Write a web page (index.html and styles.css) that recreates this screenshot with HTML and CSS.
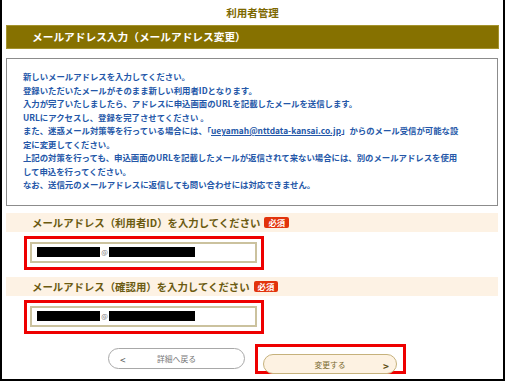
FILE: index.html
```html
<!DOCTYPE html>
<html lang="ja">
<head>
  <meta charset="UTF-8" />
  <meta name="viewport" content="width=device-width, initial-scale=1" />
  <title>利用者管理</title>
  <link rel="stylesheet" href="styles.css">
</head>
<body>
  <div class="page">
    <h1 class="title">利用者管理</h1>
    <div class="banner">メールアドレス入力（メールアドレス変更）</div>

    <div class="notice">
      新しいメールアドレスを入力してください。<br>
      登録いただいたメールがそのまま新しい利用者IDとなります。<br>
      入力が完了いたしましたら、アドレスに申込画面のURLを記載したメールを送信します。<br>
      URLにアクセスし、登録を完了させてください 。<br>
      また、迷惑メール対策等を行っている場合には、「<a class="mail" href="#">ueyamah@nttdata-kansai.co.jp</a>」からのメール受信が可能な設<br>
      定に変更してください。<br>
      上記の対策を行っても、申込画面のURLを記載したメールが返信されて来ない場合には、別のメールアドレスを使用<br>
      して申込を行ってください。<br>
      なお、送信元のメールアドレスに返信しても問い合わせには対応できません。
    </div>

    <div class="field-label">メールアドレス（利用者ID）を入力してください<span class="req">必須</span></div>
    <div class="mark mark-input">
      <div class="input"><span class="mask mask-a"></span><span class="at">@</span><span class="mask mask-b"></span></div>
    </div>

    <div class="field-label">メールアドレス（確認用）を入力してください<span class="req">必須</span></div>
    <div class="mark mark-input">
      <div class="input"><span class="mask mask-a"></span><span class="at">@</span><span class="mask mask-b"></span></div>
    </div>

    <div class="actions">
      <button class="btn btn-back"><span class="arrow">&lt;</span>詳細へ戻る</button>
      <div class="mark mark-btn">
        <button class="btn btn-next">変更する<span class="arrow">&gt;</span></button>
      </div>
    </div>
  </div>
</body>
</html>
```

FILE: styles.css
```css
* {
  box-sizing: border-box;
}

body {
  margin: 0;
  font-family: "Noto Sans CJK JP", "Noto Sans", sans-serif;
  background: #fff;
}

.page {
  width: 505px;
  height: 381px;
  border: 2px solid #000;
  border-top: none;
  padding: 0 4px 0 4px;
  display: flex;
  flex-direction: column;
  overflow: hidden;
}

.title {
  margin: 5px 0 0;
  font-size: 10.5px;
  line-height: 15px;
  font-weight: bold;
  text-align: center;
  color: #7c6800;
}

.banner {
  flex: none;
  margin-top: 5px;
  height: 24px;
  background: #867100;
  border: 1px solid #a4932e;
  color: #fff;
  font-size: 10.7px;
  font-weight: bold;
  line-height: 22px;
  padding-left: 25px;
  white-space: nowrap;
}

.notice {
  flex: none;
  margin-top: 9px;
  border: 1px solid #8c8c8c;
  padding: 11px 0 13px 16px;
  font-size: 8.4px;
  line-height: 13.5px;
  font-weight: bold;
  color: #2457a8;
  white-space: nowrap;
  margin-right: 1px;
}

.mail {
  color: #2457a8;
  text-decoration: underline;
}

.field-label {
  flex: none;
  margin-top: 7px;
  height: 19px;
  background: #fdf2e4;
  padding-left: 26px;
  font-size: 10.4px;
  line-height: 19px;
  font-weight: bold;
  color: #6b5a10;
  display: flex;
  align-items: center;
  white-space: nowrap;
  margin-right: 1px;
}

.req {
  margin-left: 4px;
  background: #e2330c;
  color: #fff;
  font-size: 8.4px;
  font-weight: bold;
  line-height: 11px;
  height: 11px;
  padding: 0 4px;
  border-radius: 2px;
}

.mark {
  flex: none;
  border: 3px solid #ee0000;
}

.mark-input {
  margin: 4px 0 0 18px;
  width: 240px;
  height: 34px;
  padding: 3px 4px 3px 3px;
}

.input {
  height: 21px;
  border: 2px solid #cbc29e;
  background: #fff;
  display: flex;
  align-items: center;
  padding-left: 5px;
}

.mask {
  display: block;
  height: 10px;
  background: #000;
}

.mask-a {
  width: 63px;
}

.mask-b {
  width: 86px;
}

.at {
  font-size: 7px;
  line-height: 10px;
  color: #777;
  width: 9px;
  text-align: center;
}

.actions {
  flex: none;
  margin-top: 10px;
  padding-left: 102px;
  display: flex;
  align-items: center;
}

.btn {
  font-family: inherit;
  font-size: 7.8px;
  height: 21px;
  border-radius: 11px;
  position: relative;
  cursor: pointer;
}

.btn-back {
  width: 137px;
  background: #fff;
  border: 1px solid #a8a8a8;
  color: #777;
}

.btn-back .arrow {
  position: absolute;
  left: 11px;
  top: 3px;
  font-size: 10px;
  color: #555;
}

.mark-btn {
  margin-left: 10px;
  width: 151px;
  height: 30px;
  padding: 2px 6px 0 5px;
}

.btn-next {
  width: 134px;
  height: 20px;
  background: #fdf2e2;
  border: 1px solid #c6b27c;
  color: #7a6a2e;
}

.btn-next .arrow {
  position: absolute;
  right: 7px;
  top: 3px;
  font-size: 10px;
  font-weight: bold;
  color: #5d4f14;
}
```
